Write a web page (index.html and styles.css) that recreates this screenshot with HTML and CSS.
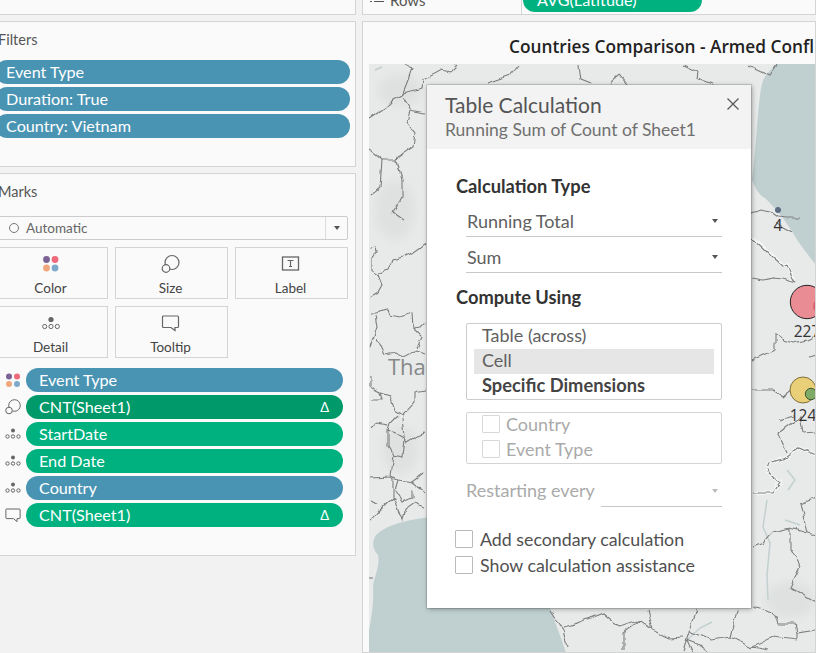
FILE: index.html
```html
<!DOCTYPE html>
<html lang="en">
<head>
<meta charset="utf-8">
<title>Table Calculation</title>
<link rel="stylesheet" href="styles.css">
</head>
<body>
<div class="app">
  <aside class="side">
    <section class="panel panel-top"></section>
    <section class="panel panel-filters">
      <h2 class="panel-title">Filters</h2>
      <div class="filter-list">
        <div class="pill pill-blue filter-pill">Event Type</div>
        <div class="pill pill-blue filter-pill">Duration: True</div>
        <div class="pill pill-blue filter-pill">Country: Vietnam</div>
      </div>
    </section>
    <section class="panel panel-marks">
      <h2 class="panel-title">Marks</h2>
      <div class="mark-select">
        <span class="mark-ring"></span><span class="mark-select-text">Automatic</span>
        <span class="mark-select-arrow"><i class="caret"></i></span>
      </div>
      <div class="mark-buttons">
        <div class="mark-btn">
          <svg class="mark-ico" width="20" height="20" viewBox="0 0 20 20"><circle cx="5.500" cy="5.500" r="3.400" fill="#7b6294"/><circle cx="14" cy="5.500" r="3.400" fill="#ef6a7a"/><circle cx="5.500" cy="14" r="3.400" fill="#f0a77c"/><circle cx="14" cy="14" r="3.400" fill="#7fa9cb"/></svg>
          <span>Color</span>
        </div>
        <div class="mark-btn">
          <svg class="mark-ico" width="20" height="20" viewBox="0 0 20 20"><circle cx="11" cy="8.500" r="7" fill="none" stroke="#666" stroke-width="1.200"/><circle cx="5" cy="14.500" r="3.800" fill="#fafafa" stroke="#666" stroke-width="1.200"/></svg>
          <span>Size</span>
        </div>
        <div class="mark-btn">
          <svg class="mark-ico" width="20" height="20" viewBox="0 0 20 20"><rect x="1.500" y="3" width="16" height="13" fill="none" stroke="#666" stroke-width="1.300"/><path d="M6.500 6.500h6M9.500 6.500v6M8 12.500h3" fill="none" stroke="#666" stroke-width="1.200"/></svg>
          <span>Label</span>
        </div>
        <div class="mark-btn">
          <svg class="mark-ico" width="20" height="20" viewBox="0 0 20 20"><circle cx="10" cy="6.500" r="2.600" fill="#666"/><circle cx="3.700" cy="13.500" r="2.100" fill="none" stroke="#666"/><circle cx="10" cy="13.500" r="2.100" fill="none" stroke="#666"/><circle cx="16.300" cy="13.500" r="2.100" fill="none" stroke="#666"/></svg>
          <span>Detail</span>
        </div>
        <div class="mark-btn">
          <svg class="mark-ico" width="20" height="20" viewBox="0 0 20 20"><path d="M2.500 3h14a1 1 0 0 1 1 1v9.500a1 1 0 0 1-1 1h-2.500v3l-4-3h-7.500a1 1 0 0 1-1-1v-9.500a1 1 0 0 1 1-1z" fill="none" stroke="#666" stroke-width="1.200"/></svg>
          <span>Tooltip</span>
        </div>
      </div>
      <div class="shelf">
        <div class="shelf-row">
          <svg class="shelf-ico" width="16" height="16" viewBox="0 0 16 16"><circle cx="4" cy="4.500" r="3" fill="#7b6294"/><circle cx="12" cy="4.500" r="3" fill="#ef6a7a"/><circle cx="4" cy="12" r="3" fill="#f0a77c"/><circle cx="12" cy="12" r="3" fill="#7fa9cb"/></svg>
          <div class="pill pill-blue shelf-pill">Event Type</div>
        </div>
        <div class="shelf-row">
          <svg class="shelf-ico" width="16" height="16" viewBox="0 0 16 16"><circle cx="9.500" cy="6.500" r="5.800" fill="none" stroke="#666"/><circle cx="4" cy="11.500" r="3.300" fill="#fafafa" stroke="#666"/></svg>
          <div class="pill pill-dark shelf-pill">CNT(Sheet1)<span class="delta">Δ</span></div>
        </div>
        <div class="shelf-row">
          <svg class="shelf-ico" width="16" height="16" viewBox="0 0 16 16"><circle cx="8" cy="4.500" r="2" fill="#666"/><circle cx="2.500" cy="10.500" r="1.700" fill="none" stroke="#666"/><circle cx="8" cy="10.500" r="1.700" fill="none" stroke="#666"/><circle cx="13.500" cy="10.500" r="1.700" fill="none" stroke="#666"/></svg>
          <div class="pill pill-green shelf-pill">StartDate</div>
        </div>
        <div class="shelf-row">
          <svg class="shelf-ico" width="16" height="16" viewBox="0 0 16 16"><circle cx="8" cy="4.500" r="2" fill="#666"/><circle cx="2.500" cy="10.500" r="1.700" fill="none" stroke="#666"/><circle cx="8" cy="10.500" r="1.700" fill="none" stroke="#666"/><circle cx="13.500" cy="10.500" r="1.700" fill="none" stroke="#666"/></svg>
          <div class="pill pill-green shelf-pill">End Date</div>
        </div>
        <div class="shelf-row">
          <svg class="shelf-ico" width="16" height="16" viewBox="0 0 16 16"><circle cx="8" cy="4.500" r="2" fill="#666"/><circle cx="2.500" cy="10.500" r="1.700" fill="none" stroke="#666"/><circle cx="8" cy="10.500" r="1.700" fill="none" stroke="#666"/><circle cx="13.500" cy="10.500" r="1.700" fill="none" stroke="#666"/></svg>
          <div class="pill pill-blue shelf-pill">Country</div>
        </div>
        <div class="shelf-row">
          <svg class="shelf-ico" width="16" height="16" viewBox="0 0 16 16"><path d="M1.500 2h13a.6.600 0 0 1 .6.600v8.400a.6.600 0 0 1-.6.600h-2.500v3l-3.500-3h-7a.6.600 0 0 1-.6-.6v-8.400a.6.600 0 0 1 .6-.6z" fill="none" stroke="#666"/></svg>
          <div class="pill pill-green shelf-pill">CNT(Sheet1)<span class="delta">Δ</span></div>
        </div>
      </div>
    </section>
  </aside>

  <main class="content">
    <section class="panel rows-shelf">
      <div class="rows-label">
        <svg width="14" height="10" viewBox="0 0 14 10"><path d="M0 3h2M4 3h10M0 6.500h2M4 6.500h10M0 0h2M4 0h10" stroke="#555" stroke-width="1.200"/></svg>
        <span>Rows</span>
      </div>
      <div class="rows-well"><div class="pill pill-green rows-pill">AVG(Latitude)</div></div>
    </section>
    <section class="panel sheet">
      <h1 class="sheet-title">Countries Comparison - Armed Conflicts</h1>
      <div class="map">
        <svg class="map-svg" width="447" height="589" viewBox="369 64 447 589">
          <defs>
            <filter id="jag" filterUnits="userSpaceOnUse" x="369" y="64" width="447" height="589" color-interpolation-filters="sRGB">
              <feTurbulence type="fractalNoise" baseFrequency=".09" numOctaves="2" seed="4" result="noise"/>
              <feDisplacementMap in="SourceGraphic" in2="noise" scale="6" xChannelSelector="R" yChannelSelector="G"/>
              <feGaussianBlur stdDeviation=".4"/>
            </filter>
            <filter id="soft" filterUnits="userSpaceOnUse" x="369" y="64" width="447" height="589">
              <feGaussianBlur stdDeviation="5"/>
            </filter>
          </defs>
          <rect x="369" y="64" width="447" height="589" fill="#e8e9e9"/>
          <g filter="url(#soft)" fill="#dfe1e1">
            <ellipse cx="400" cy="90" rx="22" ry="16"/>
            <ellipse cx="395" cy="210" rx="20" ry="30"/>
            <ellipse cx="790" cy="600" rx="25" ry="18"/>
            <ellipse cx="400" cy="450" rx="18" ry="24"/>
          </g>
          <path d="M777 64C768 72 764 76 762 84C758 100 757 140 752 180C756 190 760 196 765 198C772 205 782 215 793 233C800 245 808 255 816 265V64Z" fill="#c0d0d0"/>
          <path d="M369 653V630C372 615 374 600 373 585C376 572 380 565 378 555C372 548 372 542 376 535C386 525 405 520 430 517C470 520 520 560 550 608C556 625 562 640 566 653Z" fill="#c0d0d0"/>
          <g filter="url(#jag)" fill="none" stroke="#f6f7f7" stroke-width="3.500">
            <polyline points="753,237 763,247 773,257 783,266 787,264 790,272 795,282"/>
            <polyline points="753,493 773,493 780,483 767,472 770,463 787,457 800,448 816,455"/>
          </g>
          <g fill="none" stroke="#c3d0d0" stroke-width="1.500">
            <polyline points="767,500 763,527 770,543 767,575 768,600"/>
            <polyline points="787,470 795,480 788,490"/>
            <polyline points="785,520 800,525"/>
            <polyline points="687,640 700,628 712,622"/>
            <polyline points="375,70 382,67"/>
          </g>
          <g filter="url(#jag)" fill="none" stroke="#7c7e7e" stroke-width="1.100">
            <polyline points="405,65 412,68 408,80 402,95 393,100 385,108 370,118"/>
            <polyline points="457,65 450,72 442,70 423,80 422,88 403,93"/>
            <polyline points="402,97 410,110 425,113"/>
            <polyline points="410,110 407,123 415,133 413,147 398,157 397,160 382,160 370,150"/>
            <polyline points="382,160 380,187 370,195"/>
            <polyline points="397,160 402,180 402,197 393,213 403,220"/>
            <polyline points="518,65 510,75 487,83"/>
            <polyline points="578,65 580,80 590,84"/>
            <polyline points="610,84 620,75 627,83"/>
            <polyline points="683,65 698,72 697,78 713,84"/>
            <polyline points="748,65 770,75 777,65"/>
            <polyline points="370,248 375,247 376,253 373,258 373,272 378,275 382,285 378,292 370,297"/>
            <polyline points="425,245 415,252 403,257 392,260 388,270 378,273"/>
            <polyline points="370,313 375,313 388,310 390,315 400,317 412,313 413,328 421,327 425,323"/>
            <polyline points="375,315 377,327 370,347"/>
            <polyline points="377,338 385,355 395,353 403,357 417,350 425,353"/>
            <polyline points="413,328 422,337 417,348"/>
            <polyline points="370,375 370,387 380,392 382,400 370,400"/>
            <polyline points="380,392 390,395 395,410 403,415 415,402 415,392 425,390"/>
            <polyline points="398,415 390,423 388,430 405,438 407,442 415,437 425,433"/>
            <polyline points="370,427 377,423 388,425"/>
            <polyline points="403,417 405,438"/>
            <polyline points="388,430 388,447 393,455 403,457 405,438"/>
            <polyline points="393,455 390,477 370,478"/>
            <polyline points="390,477 398,480 412,482 423,473"/>
            <polyline points="412,482 425,492"/>
            <polyline points="393,478 393,497 402,520 405,510 415,503 425,507"/>
            <polyline points="393,498 380,510 370,522"/>
            <polyline points="370,500 378,503"/>
            <polyline points="398,480 395,490 403,502 412,498 412,490"/>
            <polyline points="370,578 373,578"/>
            <polyline points="752,213 760,210 770,212 777,217 787,218 800,218"/>
            <polyline points="775,222 793,232"/>
            <polyline points="752,238 763,248 773,258 783,267 787,265 790,273 795,283"/>
            <polyline points="752,278 763,280 773,278 783,279 795,283"/>
            <polyline points="752,360 763,355 775,350 775,333 783,340 793,343 807,340 813,337"/>
            <polyline points="810,357 816,355"/>
            <polyline points="752,390 767,390 773,390 783,397 792,390"/>
            <polyline points="780,420 792,416"/>
            <polyline points="753,493 773,493 780,483 767,472 770,463 787,457 800,448 816,455"/>
            <polyline points="753,547 763,543 773,532 790,528 807,533 816,535"/>
            <polyline points="790,528 790,550 800,567 790,587 816,603"/>
            <polyline points="800,503 807,533"/>
            <polyline points="800,503 816,497"/>
            <polyline points="778,433 787,453"/>
            <polyline points="778,433 800,417 803,433 816,432"/>
            <polyline points="753,607 773,613 778,623 795,623 797,633 816,630"/>
            <polyline points="797,633 797,640 773,637 753,647 767,650"/>
            <polyline points="737,610 730,637 753,648"/>
            <polyline points="697,610 683,650"/>
            <polyline points="687,630 710,640 730,637"/>
            <polyline points="648,610 653,630 670,638 683,637"/>
            <polyline points="550,610 563,630 567,647"/>
            <polyline points="563,627 577,623 603,613 620,627 640,620 653,630"/>
            <polyline points="640,620 623,633 623,650"/>
            <polyline points="693,653 687,640 700,645 710,653"/>
          </g>
          <text x="388" y="375" class="map-country">Thailand</text>
          <circle cx="778" cy="210" r="2.600" fill="#5d6d82" stroke="#5d6d82"/>
          <text x="778" y="231" class="map-label">4</text>
          <circle cx="807" cy="302" r="16.700" fill="#e98c94" stroke="#222" stroke-width="1"/>
          <circle cx="820" cy="306" r="7" fill="#d9606c"/>
          <text x="807" y="337" class="map-label">227</text>
          <circle cx="803" cy="390" r="13" fill="#e9cf77" stroke="#80703a" stroke-width="1"/>
          <circle cx="811" cy="394" r="5.700" fill="#7fab67" stroke="#3e5a34" stroke-width="1"/>
          <text x="803" y="421" class="map-label">124</text>
        </svg>
      </div>
    </section>
  </main>

  <div class="dialog">
    <header class="dialog-head">
      <div class="dialog-title">Table Calculation</div>
      <div class="dialog-sub">Running Sum of Count of Sheet1</div>
      <svg class="dialog-close" width="14" height="14" viewBox="0 0 14 14"><path d="M1.500 1.500l11 11M12.500 1.500l-11 11" stroke="#555" stroke-width="1.200"/></svg>
    </header>
    <div class="dialog-body">
      <h3 class="dialog-h">Calculation Type</h3>
      <div class="select select-first"><span>Running Total</span><i class="caret"></i></div>
      <div class="select"><span>Sum</span><i class="caret"></i></div>
      <h3 class="dialog-h dialog-h-second">Compute Using</h3>
      <div class="listbox">
        <div class="list-item">Table (across)</div>
        <div class="list-item list-item-on">Cell</div>
        <div class="list-item list-item-bold">Specific Dimensions</div>
      </div>
      <div class="dimbox">
        <label class="dim"><span class="check check-off"></span>Country</label>
        <label class="dim"><span class="check check-off"></span>Event Type</label>
      </div>
      <div class="restart">
        <span>Restarting every</span>
        <div class="select select-off"><i class="caret"></i></div>
      </div>
      <label class="opt opt-first"><span class="check"></span>Add secondary calculation</label>
      <label class="opt"><span class="check"></span>Show calculation assistance</label>
    </div>
  </div>
</div>
</body>
</html>
```
FILE: styles.css
```css
* { box-sizing: border-box; }
html, body { margin: 0; height: 100%; overflow: hidden; }
body {
  background: #f2f2f2;
  font-family: "Lato", "Open Sans", sans-serif;
  color: #333;
}
.app {
  display: flex;
  gap: 6px;
  width: 825px;
  height: 663px;
  margin: -10px 0 0 -9px;
  position: relative;
}
.panel { background: #fafafa; border: 1px solid #d4d4d4; }
.side { width: 365px; flex: none; display: flex; flex-direction: column; gap: 6px; }
.panel-top { height: 25px; }
.panel-filters { height: 146px; padding: 0 5px 0 3px; }
.panel-marks { height: 383px; padding: 0 7px 0 3px; }
.panel-title {
  margin: 0;
  padding-left: 3px;
  font-size: 14.500px;
  font-weight: 400;
  line-height: 18px;
  color: #555;
  padding-top: 9px;
}
.filter-list { margin-top: 11px; display: flex; flex-direction: column; gap: 3px; }
.pill {
  height: 24px;
  border-radius: 12px;
  color: #fff;
  font-size: 16.200px;
  line-height: 24.500px;
  white-space: nowrap;
  display: flex;
  justify-content: space-between;
}
.pill-blue { background: #4a94b3; }
.pill-green { background: #00b180; }
.pill-dark { background: #00996a; }
.filter-pill { padding-left: 11px; }
.mark-select {
  margin-top: 15px;
  height: 24px;
  border: 1px solid #ccc;
  border-radius: 2px;
  background: #fafafa;
  display: flex;
  align-items: center;
  padding-left: 13px;
  font-size: 13.500px;
  color: #666;
}
.mark-ring { width: 10px; height: 10px; border: 1px solid #777; border-radius: 50%; margin-right: 7px; }
.mark-select-text { flex: 1; }
.mark-select-arrow { width: 22px; height: 22px; border-left: 1px solid #ddd; display: flex; align-items: center; justify-content: center; }
.caret { display: block; width: 0; height: 0; border-left: 3.500px solid transparent; border-right: 3.500px solid transparent; border-top: 4px solid #555; }
.mark-buttons {
  margin-top: 7px;
  display: grid;
  grid-template-columns: repeat(3, 113px);
  grid-auto-rows: 52px;
  gap: 7px;
}
.mark-btn {
  border: 1px solid #d4d4d4;
  display: flex;
  flex-direction: column;
  align-items: center;
  font-size: 13.500px;
  color: #444;
  padding: 6px 2px 0 0;
  line-height: 18px;
}
.mark-ico { display: block; margin-bottom: 5px; }
.shelf { margin-top: 10px; display: flex; flex-direction: column; gap: 3px; }
.shelf-row { display: flex; align-items: center; }
.shelf-ico { width: 16px; margin-left: 10px; flex: none; }
.shelf-pill { margin-left: 5px; width: 317px; padding: 0 14px 0 13px; }
.delta { font-size: 13px; }

.content { flex: 1; min-width: 0; display: flex; flex-direction: column; gap: 6px; }
.rows-shelf { height: 25px; display: flex; align-items: stretch; }
.rows-label { width: 159px; border-right: 1px solid #d4d4d4; display: flex; align-items: center; gap: 6px; padding: 0 0 5px 7px; font-size: 15px; color: #555; }
.rows-well { padding-left: 1px; }
.rows-pill { width: 179px; height: 21px; border-radius: 0 0 12px 12px / 0 0 12px 12px; padding-left: 14px; line-height: 17px; }
.sheet { flex: 1; min-height: 0; padding: 0 0 0 6px; overflow: hidden; }
.sheet-title {
  margin: 0;
  height: 42px;
  padding: 14px 0 0 140px;
  font-family: "Open Sans", sans-serif;
  font-size: 17.300px;
  font-weight: 600;
  line-height: 22px;
  color: #222;
  white-space: nowrap;
}
.map { height: 589px; overflow: hidden; }
.map-svg { display: block; }
.map-country { font-family: "Open Sans", sans-serif; font-size: 22px; fill: #858888; }
.map-label { font-family: "Open Sans", sans-serif; font-size: 15.500px; fill: #333; text-anchor: middle; }

.dialog {
  position: absolute;
  left: 436px;
  top: 95px;
  width: 324px;
  height: 523px;
  background: #fff;
  box-shadow: 0 0 0 1px rgba(0, 0, 0, .12), 1px 1px 5px rgba(0, 0, 0, .35);
}
.dialog-head { position: relative; height: 64px; background: #f3f3f3; padding: 7px 0 0 18px; }
.dialog-title { font-size: 21px; line-height: 26px; color: #555; }
.dialog-sub { font-size: 17.500px; line-height: 23px; color: #707070; }
.dialog-close { position: absolute; right: 11px; top: 12px; }
.dialog-body { padding: 26px 29px 0 28px; }
.dialog-h { margin: 0 0 0 1px; font-size: 18.300px; font-weight: 700; line-height: 22px; color: #333; }
.dialog-h-second { margin-top: 13px; }
.select {
  height: 36px;
  margin-left: 11px;
  border-bottom: 1px solid #c8c8c8;
  display: flex;
  align-items: flex-end;
  justify-content: space-between;
  font-size: 18px;
  line-height: 20px;
  color: #606060;
  padding: 0 4px 5px 1px;
}
.select .caret { margin-bottom: 8px; }
.select-first { height: 40px; }
.listbox { margin: 15px 0 0 11px; height: 77px; border: 1px solid #ccc; border-radius: 2px; padding: 0 7px; }
.list-item { height: 25px; line-height: 23px; padding-left: 8px; font-size: 18px; color: #606060; }
.list-item-on { background: #e6e6e6; }
.list-item-bold { font-weight: 700; color: #444; font-size: 18.300px; }
.dimbox { margin: 12px 0 0 11px; height: 52px; border: 1px solid #d4d4d4; border-radius: 2px; padding: 0 0 0 15px; }
.dim { display: flex; align-items: center; height: 25px; font-size: 18px; color: #aaa; }
.dim:first-child { margin-top: -2px; }
.check { width: 18px; height: 18px; border: 1px solid #bbb; border-radius: 1px; margin-right: 7px; flex: none; background: #fff; }
.check-off { border-color: #d8d8d8; margin-right: 6px; }
.restart { margin: 8px 0 0 11px; height: 36px; display: flex; align-items: center; justify-content: space-between; font-size: 18px; color: #aaa; }
.select-off { width: 121px; margin-left: 0; height: 33px; margin-top: 1px; }
.select-off .caret { border-top-color: #bbb; margin-left: auto; }
.opt { display: flex; align-items: center; height: 26px; font-size: 17.800px; color: #505050; line-height: 22px; }
.opt-first { margin-top: 18px; }
```
